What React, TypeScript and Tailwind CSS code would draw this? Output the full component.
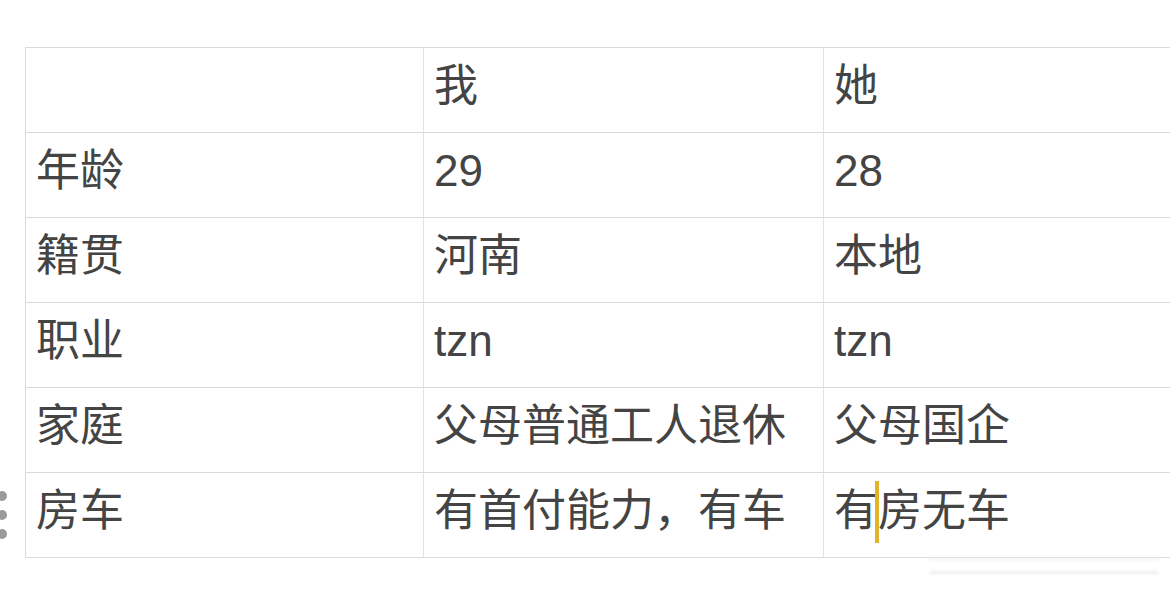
import React from 'react';

const rows: string[][] = [
  ['', '我', '她'],
  ['年龄', '29', '28'],
  ['籍贯', '河南', '本地'],
  ['职业', 'tzn', 'tzn'],
  ['家庭', '父母普通工人退休', '父母国企'],
  ['房车', '有首付能力，有车', '有房无车'],
];

const App: React.FC = () => {
  return (
    <div
      className="relative w-[1170px] h-[603px] overflow-hidden bg-white text-[#444444]"
      style={{ fontFamily: '"Liberation Sans", "Noto Sans CJK SC", sans-serif' }}
    >
      <div className="pt-[47px] pl-[25px]">
        <div className="w-[1200px] border-t border-l border-[#dadada]">
          {rows.map((row, i) => (
            <div key={i} className="relative grid grid-cols-[398px_400px_402px] h-[85px] border-b border-[#dadada]">
              {row.map((cell, j) => (
                <div
                  key={j}
                  className={`flex items-center pl-[10px] pb-[9px] text-[44px] leading-none ${j < 2 ? 'border-r border-[#e2e2e2]' : ''}`}
                >
                  {i === 5 && j === 2 ? (
                    <span className="relative">
                      有
                      <span className="absolute left-[41px] top-[-8px] w-[4px] h-[62px] bg-[#e3b22b]" />
                      房无车
                    </span>
                  ) : (
                    cell
                  )}
                </div>
              ))}
              {i === 5 && (
                <div className="absolute left-[-29px] top-[18px] flex flex-col gap-[9px]">
                  <span className="w-[10px] h-[10px] rounded-full bg-[#9a9a9a]" />
                  <span className="w-[10px] h-[10px] rounded-full bg-[#9a9a9a]" />
                  <span className="w-[10px] h-[10px] rounded-full bg-[#9a9a9a]" />
                </div>
              )}
            </div>
          ))}
        </div>
      </div>
      {/* faded watermark strip */}
      <div className="absolute left-[930px] top-[558px] w-[228px] h-[32px] flex flex-col gap-[10px] blur-[1.5px] opacity-70">
        <div className="h-[3px] bg-[#eeeeee]" />
        <div className="h-[3px] bg-[#e6e6e6]" />
      </div>
    </div>
  );
};

export default App;
